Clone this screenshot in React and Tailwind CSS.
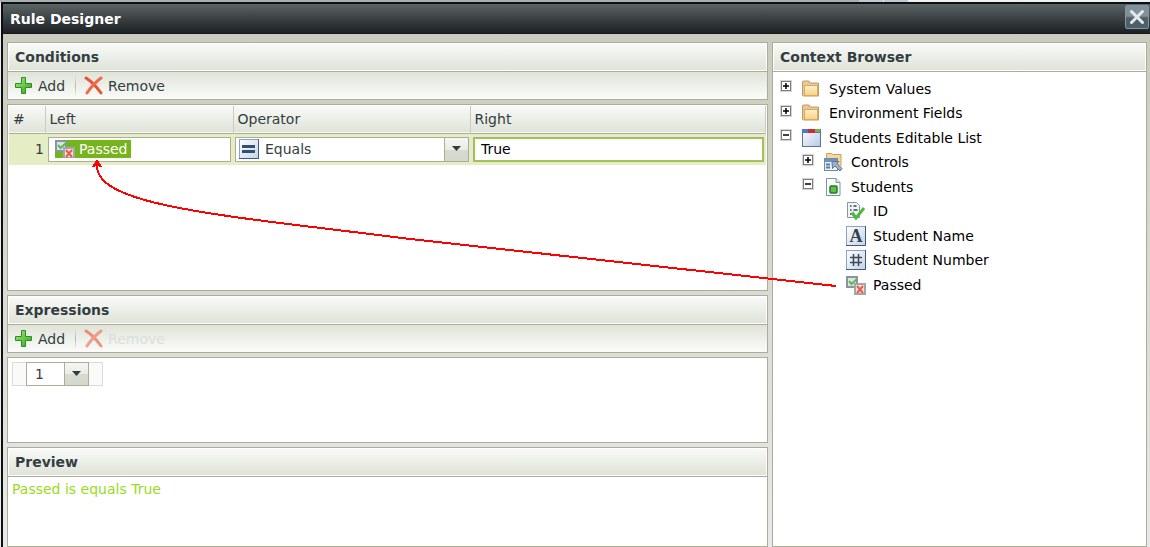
import { useState } from 'react'

const svgProps = { width: 20, height: 20, viewBox: '0 0 20 20', 'aria-hidden': true }

function FolderIcon() {
  return (
    <svg {...svgProps}>
      <defs>
        <linearGradient id="folder" x1="0" y1="0" x2="0" y2="1">
          <stop offset="0" stopColor="#fdf0cf" />
          <stop offset="1" stopColor="#fbd27c" />
        </linearGradient>
      </defs>
      <path d="M0.500 4V3q0-1 1-1h5q1 0 1 1v1h9v13h-15q-1 0-1-1z" fill="#e9c99a" stroke="#c49a63" />
      <rect x="2.500" y="6.500" width="13" height="10" fill="url(#folder)" stroke="#d9a866" />
    </svg>
  )
}

function FormIcon() {
  return (
    <svg {...svgProps}>
      <defs>
        <linearGradient id="form" x1="0" y1="0" x2="1" y2="1">
          <stop offset="0" stopColor="#ffffff" />
          <stop offset="1" stopColor="#b7c9e6" />
        </linearGradient>
      </defs>
      <rect x="0.500" y="1.500" width="18" height="17" fill="url(#form)" stroke="#5b7299" />
      <rect x="0" y="1" width="19" height="4" fill="#4a7bd0" />
      <rect x="6" y="1" width="7" height="4" fill="#d22b2b" />
      <rect x="13" y="1" width="5" height="3" fill="#7fb03a" />
    </svg>
  )
}

function ControlsIcon() {
  return (
    <svg {...svgProps}>
      <path d="M2.500 7V1.500h5l1 1h8.500V14" fill="#f6d79c" stroke="#c9a05f" />
      <rect x="0.500" y="6.500" width="13" height="12" fill="#e8eff8" stroke="#6d8bb0" />
      <rect x="1" y="7" width="12" height="3" fill="#6a93c8" />
      <path d="M2 12.500h4M2 15.500h4" stroke="#5b7ba4" strokeWidth="2" />
      <path d="M8 9.500h7l-2 2 5 5-2 2.500-5-5-2.500 2.500z" fill="#9fb0c2" stroke="#64768b" />
    </svg>
  )
}

function EntityIcon() {
  return (
    <svg {...svgProps}>
      <path d="M2.500 1.500h9.500l4 4v13h-13.500z" fill="#fbfdff" stroke="#7d91a8" />
      <path d="M12 1.500v4h4" fill="#dfe8f2" stroke="#7d91a8" />
      <rect x="6" y="9" width="7" height="7" rx="1" fill="#5cc04b" stroke="#2b7a20" strokeWidth="1.500" />
    </svg>
  )
}

function IdIcon() {
  return (
    <svg {...svgProps}>
      <path d="M1.500 1.500h9l3 3v12h-12z" fill="#f1f3f7" stroke="#8a94a8" />
      <path d="M4 5h1.500M4 9h1.500M4 13h1.500M7.500 5h3M7.500 9h4" stroke="#39434f" strokeWidth="1.500" />
      <path d="M6 11.500l4 5.500L18 7" fill="none" stroke="#4fb83f" strokeWidth="3" />
    </svg>
  )
}

// bevelled blue tile shared by the field type icons
function Tile({ children }) {
  return (
    <svg {...svgProps}>
      <defs>
        <linearGradient id="tile" x1="0" y1="0" x2="1" y2="1">
          <stop offset="0" stopColor="#ffffff" />
          <stop offset="1" stopColor="#c4d3e6" />
        </linearGradient>
      </defs>
      <rect x="0.500" y="0.500" width="19" height="19" fill="url(#tile)" stroke="#8ea3c2" />
      <path d="M19.500 0v19.500H0" fill="none" stroke="#41597f" />
      {children}
    </svg>
  )
}

function TextIcon() {
  return (
    <Tile>
      <text x="10" y="16" textAnchor="middle" fontFamily="Liberation Serif, serif" fontWeight="bold" fontSize="18" fill="#36434c">A</text>
    </Tile>
  )
}

function NumberIcon() {
  return (
    <Tile>
      <path d="M7.500 4v12M12.500 4v12M4 7.500h12M4 12.500h12" fill="none" stroke="#3d4a56" strokeWidth="1.500" />
    </Tile>
  )
}

function EqualsIcon() {
  return (
    <Tile>
      <path d="M3 7.500h13M3 12.500h13" stroke="#34506f" strokeWidth="3" />
    </Tile>
  )
}

function YesNoIcon() {
  return (
    <svg {...svgProps}>
      <rect x="1" y="2" width="10" height="10" fill="#dbe5dd" stroke="#8b949e" strokeWidth="2" />
      <path d="M3 6l2.500 3L11 4" fill="none" stroke="#5cb85c" strokeWidth="2" />
      <rect x="9" y="9" width="10" height="10" fill="#f0e4e4" stroke="#a0a7b0" strokeWidth="2" />
      <path d="M11 11l6 7M17 11l-6 7" stroke="#f0593e" strokeWidth="2" />
    </svg>
  )
}

function AddIcon() {
  return (
    <svg {...svgProps}>
      <defs>
        <linearGradient id="plus" x1="0" y1="0" x2="1" y2="1">
          <stop offset="0" stopColor="#a5ea7c" />
          <stop offset="1" stopColor="#2da518" />
        </linearGradient>
      </defs>
      <path d="M7.500 1.500h4v6h6v4h-6v6h-4v-6h-6v-4h6z" fill="url(#plus)" stroke="#2f8f26" />
    </svg>
  )
}

function RemoveIcon() {
  return (
    <svg {...svgProps}>
      <path d="M2 2q8 5 15 15" fill="none" stroke="#ec5133" strokeWidth="3" strokeLinecap="round" />
      <path d="M17 2Q9 8 3 17" fill="none" stroke="#ee6a4c" strokeWidth="3" strokeLinecap="round" />
    </svg>
  )
}

function Expander({ open }) {
  return (
    <svg width="13" height="13" viewBox="0 0 13 13" aria-hidden="true">
      <rect x="1" y="1" width="10" height="10" fill="#fff" stroke="#d4d4d4" strokeWidth="2" />
      <rect x="1.500" y="1.500" width="9" height="9" fill="#fff" stroke="#7d7d7d" />
      <path d={open ? 'M3 6h6' : 'M3 6h6M6 3v6'} stroke="#000" strokeWidth="1.500" />
    </svg>
  )
}

const treeItems = [
  { label: 'System Values', level: 0, Icon: FolderIcon, open: false },
  { label: 'Environment Fields', level: 0, Icon: FolderIcon, open: false },
  { label: 'Students Editable List', level: 0, Icon: FormIcon, open: true },
  { label: 'Controls', level: 1, Icon: ControlsIcon, open: false },
  { label: 'Students', level: 1, Icon: EntityIcon, open: true },
  { label: 'ID', level: 2, Icon: IdIcon },
  { label: 'Student Name', level: 2, Icon: TextIcon },
  { label: 'Student Number', level: 2, Icon: NumberIcon },
  { label: 'Passed', level: 2, Icon: YesNoIcon },
]

const indents = ['pl-[7px]', 'pl-[29px]', 'pl-[51px]']

function PanelHeader({ title }) {
  return (
    <h2 className="h-[29px] shrink-0 border border-b-0 border-[#abad99] bg-white p-px text-sm font-bold text-[#333d42]">
      <span className="flex h-full items-center bg-linear-to-b from-[#f9faf8] to-[#dfe3d8] px-1.5">{title}</span>
    </h2>
  )
}

function Toolbar({ removeDisabled }) {
  return (
    <div className="flex h-[29px] shrink-0 items-center border border-[#abad99] bg-linear-to-b from-[#dfe3d8] to-[#fbfcfa] pl-1.5">
      <button type="button" className="flex items-center gap-1">
        <AddIcon />
        Add
      </button>
      <span className="mr-2 ml-2.5 h-5 w-px bg-linear-to-b from-[#dfe3d8] via-[#b4b7ac] to-[#f2f3f0]"></span>
      <button type="button" disabled={removeDisabled} className="group flex items-center gap-1 disabled:text-[#dcdedb]">
        <span className="group-disabled:opacity-60"><RemoveIcon /></span>
        Remove
      </button>
    </div>
  )
}

function DropArrow() {
  return (
    <span className="flex h-full w-6 shrink-0 items-center justify-center border-l border-[#abad99] bg-linear-to-b from-[#f6f7f4] via-[#e9ebe4] via-50% to-[#dfe2d8] pb-0.5 shadow-[inset_0_-11px_0_#cdd1c399]">
      <svg width="9" height="5" viewBox="0 0 9 5" aria-hidden="true">
        <path d="M0 0h9L4.500 5z" fill="#2f3d45" />
      </svg>
    </span>
  )
}

function ConditionsTable() {
  const [left, setLeft] = useState('Passed')
  const [right, setRight] = useState('True')
  const th = 'border-r border-[#c9ccc0] pl-1 text-left font-normal'

  return (
    <div className="min-h-0 flex-1 border border-[#abad99] bg-white p-px">
      <table className="w-full table-fixed border-collapse">
        <thead>
          <tr className="h-[27px] border-b border-[#abad99] bg-linear-to-b from-[#f9faf8] to-[#dfe3d8]">
            <th className={th + ' w-9'}>#</th>
            <th className={th + ' w-[188px]'}>Left</th>
            <th className={th + ' w-[237px]'}>Operator</th>
            <th className={th}>Right</th>
          </tr>
        </thead>
        <tbody>
          <tr className="h-8 bg-[#e4edc4]">
            <td className="pr-px text-right">1</td>
            <td className="pr-0.5 pl-[3px]">
              <div className="flex h-[25px] items-center border border-[#abad99] bg-white pl-1.5">
                <label className="flex h-[18px] items-center gap-1 overflow-hidden bg-[#76b41b] text-white">
                  <YesNoIcon />
                  <input
                    aria-label="Left"
                    className="w-[52px] outline-none"
                    value={left}
                    onChange={(e) => setLeft(e.target.value)}
                  />
                </label>
              </div>
            </td>
            <td className="pr-px pl-0.5">
              <div className="flex h-[25px] items-center border border-[#abad99] bg-white pl-[3px]">
                <EqualsIcon />
                <select aria-label="Operator" className="min-w-0 flex-1 appearance-none pl-1.5 outline-none">
                  <option>Equals</option>
                  <option>Not Equals</option>
                </select>
                <DropArrow />
              </div>
            </td>
            <td className="pr-0.5 pl-[3px]">
              <div className="flex h-[25px] border border-[#abad99]">
                <input
                  aria-label="Right"
                  className="w-full border border-[#99d420] bg-white px-1.5 text-black outline-none"
                  value={right}
                  onChange={(e) => setRight(e.target.value)}
                />
              </div>
            </td>
          </tr>
        </tbody>
      </table>
    </div>
  )
}

export default function App() {
  return (
    <div className="relative flex h-screen flex-col overflow-hidden bg-[#eceeee] font-['DejaVu_Sans',sans-serif] text-sm text-[#333d42]">
      {/* edge of the page behind the dialog */}
      <div className="flex h-0.5 shrink-0">
        <span className="flex-1 bg-[#a9aeb0]"></span>
        <span className="mr-px w-6 bg-[#bfc7cf]"></span>
        <span className="w-6 bg-[#bfc7cf]"></span>
        <span className="w-[242px] bg-[#eef0ef]"></span>
      </div>

      <div className="ml-px flex min-h-0 flex-1 flex-col border-t-2 border-l-2 border-[#0b1013] bg-linear-to-b from-[#c8cabb] to-[#e9e9e9]">
        <header className="flex h-[30px] shrink-0 items-start justify-between border-b border-[#12181b] bg-linear-to-b from-[#5d6466] to-[#1d2224] pt-px pr-px pl-[7px]">
          <h1 className="leading-7 font-bold text-white">Rule Designer</h1>
          <button
            type="button"
            aria-label="Close"
            className="flex size-6 items-center justify-center rounded-xs border border-[#8496a1] bg-linear-to-b from-[#80919c] from-45% to-[#4e5f69] to-55%"
          >
            <svg width="16" height="16" viewBox="0 0 16 16" aria-hidden="true">
              <path d="M2.500 2.500l11 11M13.500 2.500l-11 11" stroke="#e6eaec" strokeWidth="3" strokeLinecap="round" />
            </svg>
          </button>
        </header>

        <main className="flex min-h-0 flex-1 gap-1 pt-2 pr-[3px] pl-1">
          <div className="flex min-w-0 flex-1 flex-col">
            <section className="flex min-h-0 flex-1 flex-col">
              <PanelHeader title="Conditions" />
              <Toolbar />
              <div className="mt-1 flex min-h-0 flex-1 flex-col">
                <ConditionsTable />
              </div>
            </section>

            <section className="mt-1 flex shrink-0 flex-col">
              <PanelHeader title="Expressions" />
              <Toolbar removeDisabled />
              <div className="mt-1 h-[86px] border border-[#abad99] bg-white p-1">
                <div className="flex h-6 w-[91px] border border-[#dcdcd8] bg-[#fafaf9] px-[13px]">
                  <div className="-my-px flex flex-1 items-center border border-[#abad99] bg-white">
                    <select aria-label="Expression" className="min-w-0 flex-1 appearance-none pl-2 outline-none">
                      <option>1</option>
                    </select>
                    <DropArrow />
                  </div>
                </div>
              </div>
            </section>

            <section className="mt-1 flex shrink-0 flex-col">
              <PanelHeader title="Preview" />
              <p className="h-[71px] border border-[#abad99] bg-white px-1 py-0.5 text-[#99dc20]">Passed is equals True</p>
            </section>
          </div>

          <section className="flex w-[375px] shrink-0 flex-col">
            <PanelHeader title="Context Browser" />
            <ul className="flex-1 border border-[#abad99] bg-white pt-1 text-black">
              {treeItems.map(({ label, level, Icon, open }) => (
                <li key={label} className={'flex items-center odd:h-[25px] even:h-6 ' + indents[level]}>
                  <span className="mb-1 w-[22px] shrink-0">{open !== undefined && <Expander open={open} />}</span>
                  <Icon />
                  <span className="pl-[7px]">{label}</span>
                </li>
              ))}
            </ul>
          </section>
        </main>
      </div>

      {/* arrow from the Passed field to the left operand */}
      <svg className="pointer-events-none absolute top-0 left-0 h-full w-full" aria-hidden="true">
        <g fill="none" stroke="#f00" strokeWidth="2" shapeRendering="crispEdges">
          <path d="M836 286L410 239C230 216 97 207 97 166V161" />
          <path d="M93 167l4-6 4 6M95 165h4" />
        </g>
      </svg>
    </div>
  )
}
